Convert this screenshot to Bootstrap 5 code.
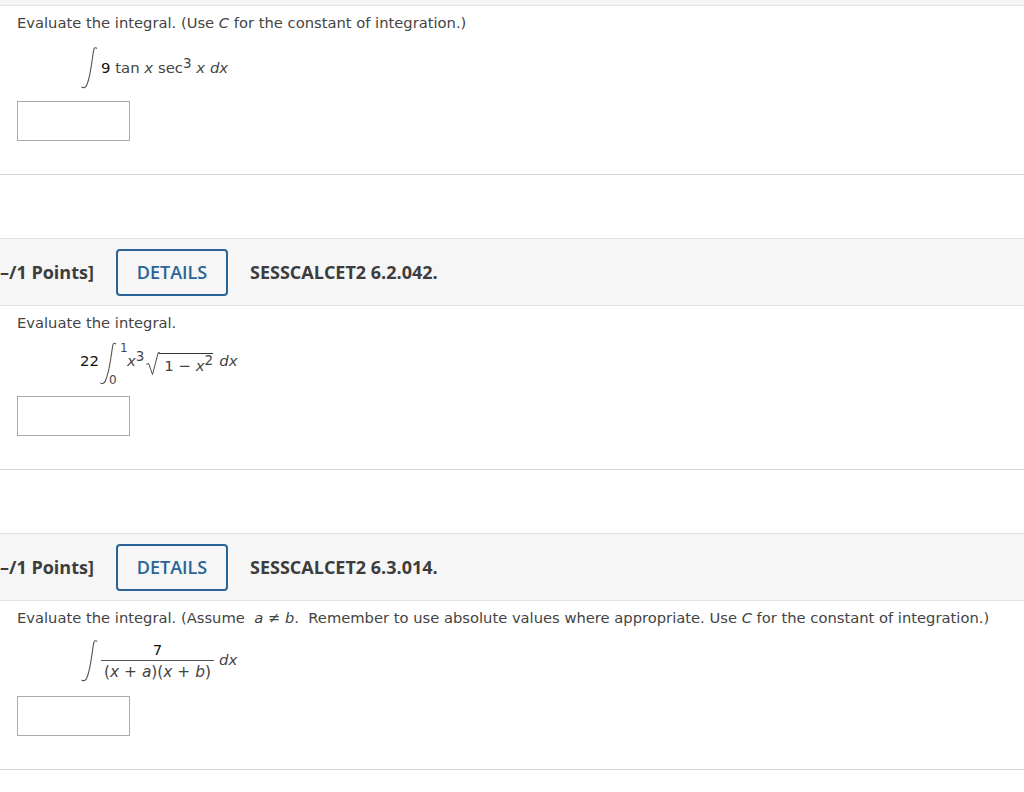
<!DOCTYPE html>
<html lang="en">
<head>
<meta charset="utf-8">
<title>Integrals</title>
<link href="https://cdn.jsdelivr.net/npm/bootstrap@5.3.0/dist/css/bootstrap.min.css" rel="stylesheet">
<style>
html,body{margin:0;background:#fff;}
body{font-family:"DejaVu Sans","Liberation Sans",sans-serif;font-size:15px;color:#444;overflow:hidden;height:792px;}
.top-strip{height:6px;background:#f6f6f6;border-bottom:1px solid #e3e3e3;}
.q-body{padding-left:17px;border-bottom:1px solid #d4d4d4;}
.q-one{height:169px;padding-top:5px;}
.q-two{height:164px;padding-top:5px;}
.q-three{height:169px;padding-top:5px;}
.q-text{line-height:24px;font-size:14.73px;white-space:nowrap;}
.q-head{height:68px;margin-top:63px;background:#f6f6f6;border-top:1px solid #e3e3e3;border-bottom:1px solid #e3e3e3;overflow:hidden;font-family:"Open Sans",sans-serif;font-weight:700;color:#3d3d3d;font-size:18px;}
.q-points{width:116px;flex:none;white-space:nowrap;}
.q-details{width:112px;height:47px;border:2px solid #2a6496;border-radius:4px;color:#2a6496;background:transparent;font-weight:600;font-size:18px;padding:0;line-height:43px;flex:none;}
.q-details:hover{color:#2a6496;border-color:#2a6496;}
.q-code{margin-left:22px;}
.q-math{padding-left:63px;font-size:14.9px;color:#444;white-space:nowrap;}
.m1{height:44px;margin-top:11px;}
.m2{height:53px;margin-top:2px;}
.m3{height:49px;margin-top:6px;}
.q-input{display:block;width:113px;height:40px;border:1px solid #a9a9a9;background:#fff;border-radius:0;padding:0;}
.i1{margin-top:11px;}
.i2{margin-top:6px;}
.i3{margin-top:11px;}
.blk{color:#111;}
.q-math sup{font-size:13.5px;top:-.38em;line-height:0;}
.raise{padding-bottom:4px;}
.lims{height:44px;font-size:12px;line-height:12px;margin-left:-8px;width:18px;}
.lim-up{padding-left:11px;}
.rad-in{border-top:1px solid #333;padding:3px 0 0 5px;line-height:18px;}
.rad-col{padding-bottom:1px;margin-left:1px;margin-right:-1px;}
.frac{width:113px;margin-right:5px;text-align:center;}
.fnum{border-bottom:1px solid #555;line-height:23px;height:22px;}
.fden{line-height:22px;font-size:15.4px;}
.gap-dx{margin-left:6px;}
</style>
</head>
<body>
<div class="top-strip"></div>

<section class="q-body q-one">
  <div class="q-text">Evaluate the integral. (Use <i>C</i> for the constant of integration.)</div>
  <div class="q-math m1 d-flex align-items-center">
    <svg width="21" height="44" viewBox="0 0 21 44"><path d="M17 2.5c-1-1-2.6-1-3.1.6C12 12 11.2 28 7 38.5c-1 3-3.6 4-5.6 2.4" fill="none" stroke="#555" stroke-width="1.1"/></svg>
    <span><span class="blk">9</span> tan <i>x</i> sec<sup>3</sup> <i>x dx</i></span>
  </div>
  <input class="q-input i1" type="text" aria-label="Answer">
</section>

<header class="q-head d-flex align-items-center">
  <span class="q-points">–/1 Points]</span>
  <button class="btn q-details" type="button">DETAILS</button>
  <span class="q-code">SESSCALCET2 6.2.042.</span>
</header>

<section class="q-body q-two">
  <div class="q-text">Evaluate the integral.</div>
  <div class="q-math m2 d-flex align-items-center">
    <span class="blk raise">22</span>
    <svg width="18" height="44" viewBox="0 0 18 44"><path d="M17 2c-1-1-2.6-1-3 .6C12 12 11.2 28 6.5 38.5c-1 3-3.4 3.8-5.4 2.4" fill="none" stroke="#555" stroke-width="1.1"/></svg>
    <div class="lims d-flex flex-column justify-content-between"><span class="lim-up">1</span><span>0</span></div>
    <span class="raise"><i>x</i><sup>3</sup></span>
    <svg class="rad-col" width="15" height="24" viewBox="0 0 15 24"><path d="M1 13l2.5-1 4 11.5L13.5 .5H15" fill="none" stroke="#444" stroke-width="1"/></svg>
    <span class="rad-in raise">1 − <i>x</i><sup>2</sup></span>
    <span class="gap-dx raise"><i>dx</i></span>
  </div>
  <input class="q-input i2" type="text" aria-label="Answer">
</section>

<header class="q-head d-flex align-items-center">
  <span class="q-points">–/1 Points]</span>
  <button class="btn q-details" type="button">DETAILS</button>
  <span class="q-code">SESSCALCET2 6.3.014.</span>
</header>

<section class="q-body q-three">
  <div class="q-text">Evaluate the integral. (Assume&nbsp; <i>a</i> ≠ <i>b</i>.&nbsp; Remember to use absolute values where appropriate. Use <i>C</i> for the constant of integration.)</div>
  <div class="q-math m3 d-flex align-items-center">
    <svg width="21" height="44" viewBox="0 0 21 44"><path d="M17 2.5c-1-1-2.6-1-3.1.6C12 12 11.2 28 7 38.5c-1 3-3.6 4-5.6 2.4" fill="none" stroke="#555" stroke-width="1.1"/></svg>
    <div class="frac">
      <div class="fnum blk">7</div>
      <div class="fden">(<i>x</i> + <i>a</i>)(<i>x</i> + <i>b</i>)</div>
    </div>
    <span><i>dx</i></span>
  </div>
  <input class="q-input i3" type="text" aria-label="Answer">
</section>
<script src="https://cdn.jsdelivr.net/npm/bootstrap@5.3.0/dist/js/bootstrap.bundle.min.js"></script>
</body>
</html>
